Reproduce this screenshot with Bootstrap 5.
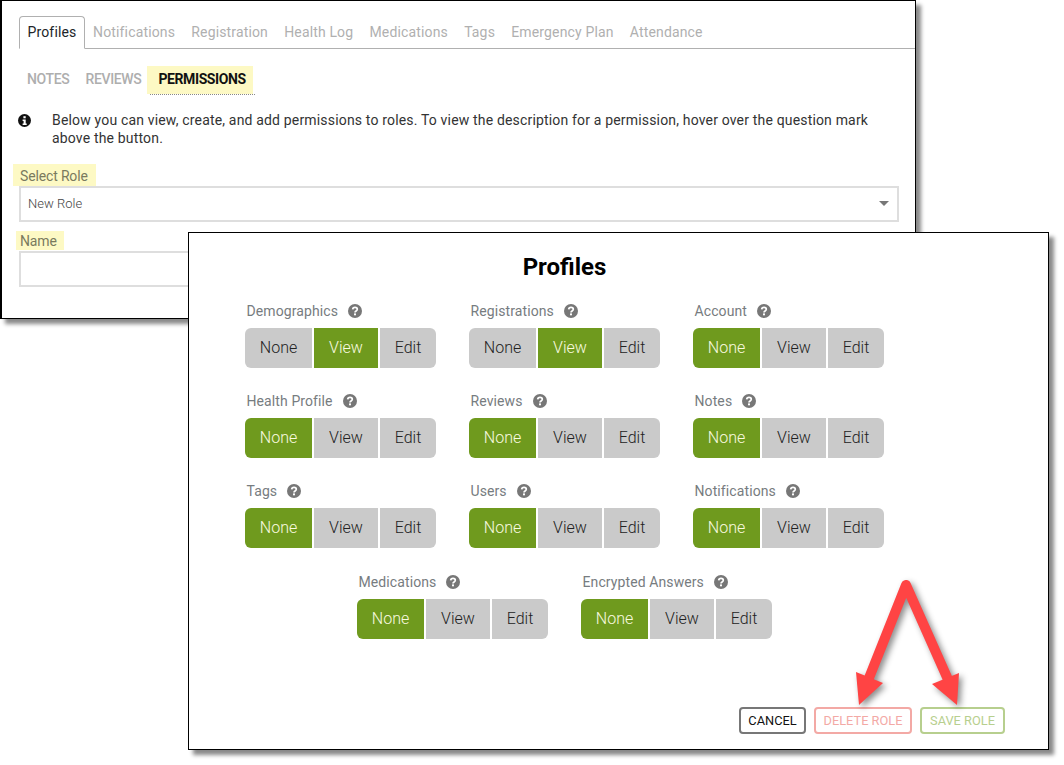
<!DOCTYPE html>
<html lang="en">
<head>
<meta charset="utf-8">
<title>Profiles permissions</title>
<link href="https://cdn.jsdelivr.net/npm/bootstrap@5.3.0/dist/css/bootstrap.min.css" rel="stylesheet">
<style>
html,body{height:100%;margin:0;background:#fff;overflow:hidden}
body{font-family:Roboto,"Liberation Sans",sans-serif;color:#212529}
.win{position:absolute;background:#fff;border:1px solid #000;box-shadow:5px 5px 4px #8a8a8a}
.win-a{left:0;top:0;width:916px;height:319px;padding:15px 17px 0 17px;border-left-width:2px}
.win-b{left:188px;top:232px;width:861px;height:518px}
.win-a .nav-tabs{border-bottom:1px solid #b0b0b0;margin-right:-17px;gap:0}
.win-a .nav-tabs .nav-link{font-size:14px;line-height:18px;padding:6px 7.100px 7px;color:#b0b0b0;border-radius:4px 4px 0 0;margin-bottom:-1px;letter-spacing:.15px}
.win-a .nav-tabs .nav-link.active{color:#212529;border-color:#b0b0b0 #b0b0b0 #fff;padding:6px 7.500px 7px}
.subnav{margin-top:17px}
.subnav .nav-link{font-size:14px;line-height:26px;padding:0 8px 2px;font-weight:500;color:#aeaeae;text-transform:uppercase;letter-spacing:-.35px}
.subnav .nav-link.current{color:#111;background:#fdf9c4;padding:0 7px 2px 11px;margin-left:-2px;position:relative;font-weight:700;letter-spacing:-.4px}
.subnav .nav-link.current::after{content:"";position:absolute;left:3px;right:-2px;bottom:-1px;border-bottom:1px dotted #888}
.intro{margin-top:17px;font-size:14px;line-height:18px;color:#333;padding-left:33px;margin-bottom:0;position:relative;letter-spacing:.17px}
.intro svg{position:absolute;left:-1px;top:3px}
.hi{background:#fdf9c4;color:#7a7a5e;font-size:14px;display:block;width:max-content;margin:0;letter-spacing:-.15px}
.hi-1{margin-top:17px;margin-left:-6px;padding:2px 8px 0 7px;line-height:20px}
.hi-2{margin-top:9px;margin-left:-3px;padding:1px 7px 0 4px;line-height:18px;margin-bottom:1px}
.win-a .form-select,.win-a .form-control{border:2px solid #dedede;border-radius:0;height:36px;font-size:13px;font-weight:300;color:#444;padding:0 7px;box-shadow:none;width:880px}
.win-a .form-select{background-image:none}
.field{position:relative;width:880px}
.caret{position:absolute;right:10px;top:15px;width:0;height:0;border-left:5px solid transparent;border-right:5px solid transparent;border-top:5px solid #777}
.title-b{font-size:24px;font-weight:700;color:#000;text-align:center;line-height:30px;margin:19px 108px 0 0;padding:0}
.grid-b{display:flex;flex-wrap:wrap;justify-content:center;column-gap:33px;width:639px;margin:20px 0 0 56px}
.perm{width:191px;height:90px}
.perm-row4{margin-top:1px}
.perm-label{font-size:14px;line-height:18px;color:#777c80;padding-left:1.500px;margin-bottom:8px;display:flex;align-items:center;gap:10px;letter-spacing:.1px}
.perm-label svg{display:block}
.seg{gap:2px;width:191px}
.seg .btn{height:40px;background:#cacaca;border:0;border-radius:0;color:#222;font-size:16px;font-weight:300;padding:0;line-height:40px}
.seg .btn:nth-child(1){width:67px;border-radius:6px 0 0 6px}
.seg .btn:nth-child(2){width:64px}
.seg .btn:nth-child(3){width:56px;border-radius:0 6px 6px 0}
.seg .btn.on{background:#6f9a1e;color:#fafbe0}
.foot{position:absolute;top:474px;left:550px;display:flex;gap:8px}
.foot .btn{height:27px;font-size:12.800px;line-height:23px;padding:0;border-width:2px;border-radius:4px;background:#fff}
.b-cancel{width:67px;border-color:#777;color:#111}
.b-del{width:98px;border-color:#f3a9a5;color:#f3a9a5}
.b-save{width:85px;border-color:#b7cf8e;color:#b7cf8e}
.arrows{position:absolute;left:0;top:0;width:1064px;height:765px;pointer-events:none;filter:drop-shadow(3px 3px 3px rgba(0,0,0,.45))}
</style>
</head>
<body>
<section class="win win-a">
  <ul class="nav nav-tabs">
    <li class="nav-item"><a class="nav-link active" href="#">Profiles</a></li>
    <li class="nav-item"><a class="nav-link" href="#">Notifications</a></li>
    <li class="nav-item"><a class="nav-link" href="#">Registration</a></li>
    <li class="nav-item"><a class="nav-link" href="#">Health Log</a></li>
    <li class="nav-item"><a class="nav-link" href="#">Medications</a></li>
    <li class="nav-item"><a class="nav-link" href="#">Tags</a></li>
    <li class="nav-item"><a class="nav-link" href="#">Emergency Plan</a></li>
    <li class="nav-item"><a class="nav-link" href="#">Attendance</a></li>
  </ul>
  <nav class="nav subnav">
    <a class="nav-link" href="#">Notes</a>
    <a class="nav-link" href="#">Reviews</a>
    <a class="nav-link current" href="#">Permissions</a>
  </nav>
  <p class="intro">
    <svg width="13" height="13" viewBox="0 0 13 13"><circle cx="6.500" cy="6.500" r="6.500" fill="#111"/><rect x="5.400" y="2.200" width="2.300" height="2.100" fill="#fff"/><path d="M4.600 5.500h3.100v4h1v1.400H4.600V9.500h1V6.900h-1z" fill="#fff"/></svg>
    Below you can view, create, and add permissions to roles. To view the description for a permission, hover over the question mark above the button.
  </p>
  <label class="hi hi-1" for="role">Select Role</label>
  <div class="field">
    <select class="form-select" id="role"><option>New Role</option></select>
    <span class="caret"></span>
  </div>
  <label class="hi hi-2" for="rname">Name</label>
  <input class="form-control" id="rname" type="text">
</section>

<section class="win win-b">
  <h1 class="title-b">Profiles</h1>
  <div class="grid-b" id="grid"></div>
  <div class="foot">
    <button class="btn b-cancel" type="button">CANCEL</button>
    <button class="btn b-del" type="button">DELETE ROLE</button>
    <button class="btn b-save" type="button">SAVE ROLE</button>
  </div>
</section>

<svg class="arrows" viewBox="0 0 1064 765">
  <path d="M906 585 867 683M906 585 950 684" fill="none" stroke="#ff4444" stroke-width="10" stroke-linecap="round" stroke-linejoin="round"/>
  <polygon points="856,672 883,683 859,705" fill="#ff4444"/>
  <polygon points="959,673 932,684 957,705" fill="#ff4444"/>
</svg>

<script>
var items=[["Demographics",1],["Registrations",1],["Account",0],["Health Profile",0],["Reviews",0],["Notes",0],["Tags",0],["Users",0],["Notifications",0],["Medications",0],["Encrypted Answers",0]];
var q='<svg width="14" height="14" viewBox="0 0 14 14"><circle cx="7" cy="7" r="7" fill="#777"/><path d="M4.700 5.400C4.800 4.100 5.800 3.400 7 3.400c1.300 0 2.300.8 2.300 1.900 0 1.800-2.300 1.600-2.300 3.200" fill="none" stroke="#fff" stroke-width="1.700"/><rect x="6" y="9.400" width="2" height="1.900" fill="#fff"/></svg>';
var h='';
items.forEach(function(it,i){
  var names=["None","View","Edit"];
  h+='<div class="perm'+(i>8?' perm-row4':'')+'"><div class="perm-label"><span>'+it[0]+'</span>'+q+'</div><div class="seg d-flex" role="group">';
  names.forEach(function(n,j){h+='<button type="button" class="btn'+(j===it[1]?' on':'')+'">'+n+'</button>';});
  h+='</div></div>';
});
document.getElementById('grid').innerHTML=h;
</script>
<script src="https://cdn.jsdelivr.net/npm/bootstrap@5.3.0/dist/js/bootstrap.bundle.min.js"></script>
</body>
</html>
